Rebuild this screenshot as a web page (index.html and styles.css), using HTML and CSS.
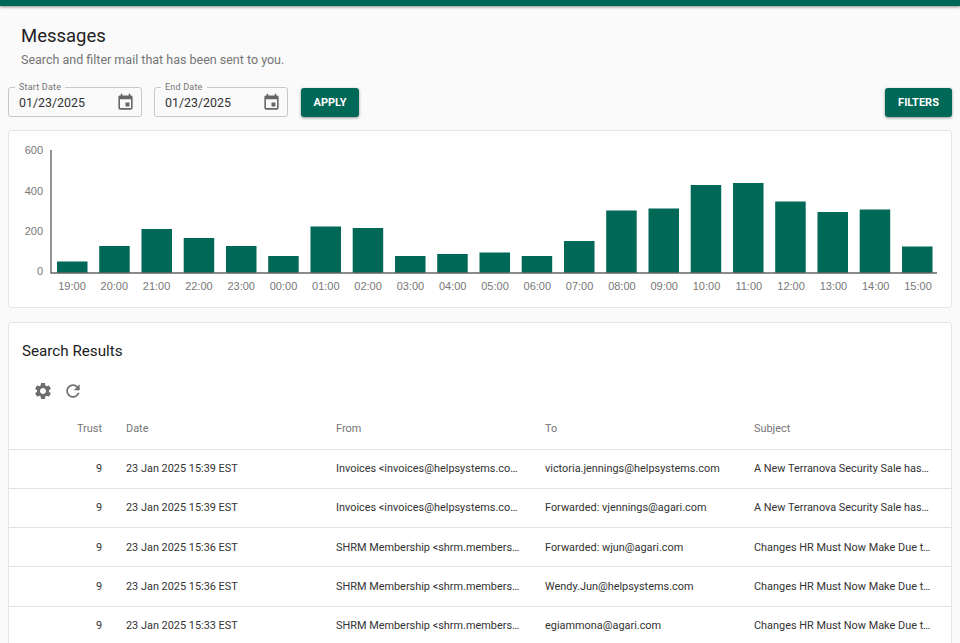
FILE: index.html
```html
<!DOCTYPE html>
<html lang="en">
<head>
<meta charset="utf-8">
<title>Messages</title>
<link rel="stylesheet" href="styles.css">
</head>
<body>
<div class="topbar"></div>
<main class="page">
  <header class="heading">
    <h1>Messages</h1>
    <p>Search and filter mail that has been sent to you.</p>
  </header>
  <div class="toolbar">
    <div class="field">
      <span class="field-label">Start Date</span>
      <span class="field-value">01/23/2025</span>
      <svg class="cal" viewBox="0 0 24 24"><path d="M19 3h-1V1h-2v2H8V1H6v2H5c-1.11 0-2 .9-2 2v14c0 1.1.89 2 2 2h14c1.1 0 2-.9 2-2V5c0-1.1-.9-2-2-2zm0 16H5V8h14v11zM17 12h-5v5h5v-5z"/></svg>
    </div>
    <div class="field">
      <span class="field-label">End Date</span>
      <span class="field-value">01/23/2025</span>
      <svg class="cal" viewBox="0 0 24 24"><path d="M19 3h-1V1h-2v2H8V1H6v2H5c-1.11 0-2 .9-2 2v14c0 1.1.89 2 2 2h14c1.1 0 2-.9 2-2V5c0-1.1-.9-2-2-2zm0 16H5V8h14v11zM17 12h-5v5h5v-5z"/></svg>
    </div>
    <button class="btn apply">APPLY</button>
    <button class="btn filters">FILTERS</button>
  </div>
  <section class="card chart-card">
    <svg class="chart" viewBox="0 0 944 177" width="944" height="177">
      <g class="bars" transform="translate(-8 -130)">
        <rect x="57" y="261.500" width="30.500" height="11.500"/>
        <rect x="99.200" y="246" width="30.500" height="27"/>
        <rect x="141.500" y="229" width="30.500" height="44"/>
        <rect x="183.700" y="238" width="30.500" height="35"/>
        <rect x="226" y="246" width="30.500" height="27"/>
        <rect x="268.200" y="256" width="30.500" height="17"/>
        <rect x="310.500" y="226.500" width="30.500" height="46.500"/>
        <rect x="352.700" y="228" width="30.500" height="45"/>
        <rect x="395" y="256" width="30.500" height="17"/>
        <rect x="437.200" y="254" width="30.500" height="19"/>
        <rect x="479.500" y="252.500" width="30.500" height="20.500"/>
        <rect x="521.700" y="256" width="30.500" height="17"/>
        <rect x="564" y="241" width="30.500" height="32"/>
        <rect x="606.200" y="210.500" width="30.500" height="62.500"/>
        <rect x="648.500" y="208.500" width="30.500" height="64.500"/>
        <rect x="690.700" y="185" width="30.500" height="88"/>
        <rect x="733" y="183" width="30.500" height="90"/>
        <rect x="775.200" y="201.500" width="30.500" height="71.500"/>
        <rect x="817.500" y="212" width="30.500" height="61"/>
        <rect x="859.700" y="209.500" width="30.500" height="63.500"/>
        <rect x="902" y="246.500" width="30.500" height="26.500"/>
      </g>
      <g class="axis" transform="translate(-8 -130)">
        <path d="M51 150V273H937"/>
      </g>
      <g class="ylabels" transform="translate(-8 -130)">
        <text x="43" y="154">600</text>
        <text x="43" y="195">400</text>
        <text x="43" y="235">200</text>
        <text x="43" y="275">0</text>
      </g>
      <g class="xlabels" transform="translate(-8 -130)">
        <text x="72" y="290">19:00</text>
        <text x="114.300" y="290">20:00</text>
        <text x="156.600" y="290">21:00</text>
        <text x="198.900" y="290">22:00</text>
        <text x="241.200" y="290">23:00</text>
        <text x="283.500" y="290">00:00</text>
        <text x="325.800" y="290">01:00</text>
        <text x="368.100" y="290">02:00</text>
        <text x="410.400" y="290">03:00</text>
        <text x="452.700" y="290">04:00</text>
        <text x="495" y="290">05:00</text>
        <text x="537.300" y="290">06:00</text>
        <text x="579.600" y="290">07:00</text>
        <text x="621.900" y="290">08:00</text>
        <text x="664.200" y="290">09:00</text>
        <text x="706.500" y="290">10:00</text>
        <text x="748.800" y="290">11:00</text>
        <text x="791.100" y="290">12:00</text>
        <text x="833.400" y="290">13:00</text>
        <text x="875.700" y="290">14:00</text>
        <text x="918" y="290">15:00</text>
      </g>
    </svg>
  </section>
  <section class="card results">
    <h2>Search Results</h2>
    <div class="icons">
      <svg class="ico" viewBox="0 0 24 24"><path d="M19.14 12.94c.04-.3.06-.61.06-.94 0-.32-.02-.64-.07-.94l2.03-1.58c.18-.14.23-.41.12-.61l-1.92-3.32c-.12-.22-.37-.29-.59-.22l-2.39.96c-.5-.38-1.03-.7-1.62-.94l-.36-2.54c-.04-.24-.24-.41-.48-.41h-3.84c-.24 0-.43.17-.47.41l-.36 2.54c-.59.24-1.13.57-1.62.94l-2.39-.96c-.22-.08-.47 0-.59.22L2.74 8.87c-.12.21-.08.47.12.61l2.03 1.58c-.05.3-.09.63-.09.94s.02.64.07.94l-2.03 1.58c-.18.14-.23.41-.12.61l1.92 3.32c.12.22.37.29.59.22l2.39-.96c.5.38 1.03.7 1.62.94l.36 2.54c.05.24.24.41.48.41h3.84c.24 0 .44-.17.47-.41l.36-2.54c.59-.24 1.13-.56 1.62-.94l2.39.96c.22.08.47 0 .59-.22l1.92-3.32c.12-.22.07-.47-.12-.61l-2.01-1.58zM12 15.6c-1.98 0-3.6-1.62-3.6-3.6s1.62-3.6 3.6-3.6 3.6 1.62 3.6 3.6-1.62 3.6-3.6 3.6z"/></svg>
      <svg class="ico" viewBox="0 0 24 24"><path d="M17.65 6.35C16.2 4.9 14.21 4 12 4c-4.42 0-7.99 3.58-7.99 8s3.57 8 7.99 8c3.73 0 6.84-2.55 7.73-6h-2.08c-.82 2.33-3.04 4-5.65 4-3.31 0-6-2.69-6-6s2.69-6 6-6c1.66 0 3.14.69 4.22 1.78L13 11h7V4l-2.35 2.35z"/></svg>
    </div>
    <table>
      <thead>
        <tr><th class="trust">Trust</th><th class="date">Date</th><th class="from">From</th><th class="to">To</th><th class="subject">Subject</th></tr>
      </thead>
      <tbody>
        <tr><td class="trust">9</td><td>23 Jan 2025 15:39 EST</td><td><span class="clip">Invoices &lt;invoices@helpsystems.com&gt;</span></td><td>victoria.jennings@helpsystems.com</td><td><span class="clip sale">A New Terranova Security Sale has been made</span></td></tr>
        <tr><td class="trust">9</td><td>23 Jan 2025 15:39 EST</td><td><span class="clip">Invoices &lt;invoices@helpsystems.com&gt;</span></td><td>Forwarded: vjennings@agari.com</td><td><span class="clip sale">A New Terranova Security Sale has been made</span></td></tr>
        <tr><td class="trust">9</td><td>23 Jan 2025 15:36 EST</td><td><span class="clip">SHRM Membership &lt;shrm.membership@shrm.org&gt;</span></td><td>Forwarded: wjun@agari.com</td><td><span class="clip subj">Changes HR Must Now Make Due to New Rules</span></td></tr>
        <tr><td class="trust">9</td><td>23 Jan 2025 15:36 EST</td><td><span class="clip">SHRM Membership &lt;shrm.membership@shrm.org&gt;</span></td><td>Wendy.Jun@helpsystems.com</td><td><span class="clip subj">Changes HR Must Now Make Due to New Rules</span></td></tr>
        <tr><td class="trust">9</td><td>23 Jan 2025 15:33 EST</td><td><span class="clip">SHRM Membership &lt;shrm.membership@shrm.org&gt;</span></td><td>egiammona@agari.com</td><td><span class="clip subj">Changes HR Must Now Make Due to New Rules</span></td></tr>
      </tbody>
    </table>
  </section>
</main>
</body>
</html>
```
FILE: styles.css
```css
* { box-sizing: border-box; }
html, body { margin: 0; height: 100%; overflow: hidden; }
body {
  background: #fafafa;
  font-family: Roboto, "Liberation Sans", sans-serif;
  color: #212121;
}
.topbar {
  height: 6px;
  background: #006856;
  box-shadow: 0 1px 3px rgba(0, 0, 0, .45);
}
.page { padding: 0 8px; }
.heading { padding: 19px 0 0 13px; height: 73px; }
.heading h1 {
  margin: 0;
  font-size: 18.5px;
  font-weight: 400;
  line-height: 23px;
  color: #212121;
}
.heading p {
  margin: 3px 0 0;
  font-size: 12.5px;
  line-height: 18px;
  color: #757575;
}
.toolbar {
  display: flex;
  align-items: flex-start;
  height: 43px;
  margin-top: 8px;
}
.field {
  position: relative;
  display: flex;
  align-items: center;
  justify-content: space-between;
  width: 134px;
  height: 30px;
  margin-right: 12px;
  padding: 0 6px 0 10px;
  border: 1px solid #c8c8c8;
  border-radius: 3px;
}
.field-label {
  position: absolute;
  top: -6px;
  left: 6px;
  padding: 0 4px;
  background: #fafafa;
  font-size: 9px;
  line-height: 11px;
  letter-spacing: .2px;
  color: #757575;
}
.field-value { font-size: 12.4px; color: #333; }
.cal { width: 19px; height: 19px; fill: #666; }
.btn {
  height: 29px;
  margin-top: 1px;
  padding: 0 0 1px;
  border: 0;
  border-radius: 3px;
  background: #006856;
  color: #fff;
  font-family: inherit;
  font-size: 11px;
  font-weight: 700;
  box-shadow: 0 1px 3px rgba(0, 0, 0, .4);
}
.apply { width: 58px; margin-left: 1px; }
.filters { width: 67px; margin-left: auto; }
.card {
  background: #fff;
  border: 1px solid #e6e6e6;
  border-radius: 3px;
}
.chart-card { height: 178px; overflow: hidden; }
.chart { display: block; margin: -1px 0 0 -1px; }
.bars rect { fill: #006856; }
.axis path { fill: none; stroke: #666; stroke-width: 1.4; }
.ylabels text, .xlabels text {
  font-family: "Liberation Sans", sans-serif;
  font-size: 11px;
  fill: #777;
}
.ylabels text { text-anchor: end; }
.xlabels text { text-anchor: middle; }
.results { margin-top: 14px; height: 340px; overflow: hidden; }
.results h2 {
  margin: 0;
  padding: 18px 0 0 13px;
  font-size: 15.2px;
  font-weight: 400;
  line-height: 20px;
  color: #212121;
}
.icons {
  display: flex;
  gap: 10px;
  margin-top: 20px;
  padding-left: 24px;
  height: 20px;
}
.ico { width: 20px; height: 20px; fill: #6e6e6e; }
table {
  width: 100%;
  margin-top: 9px;
  border-collapse: collapse;
  table-layout: fixed;
  font-size: 10.9px;
}
th {
  height: 39px;
  padding: 0 0 2px;
  text-align: left;
  font-weight: 400;
  color: #757575;
  border-bottom: 1px solid #e2e2e2;
}
td {
  height: 39.3px;
  padding: 0;
  color: #333;
  border-bottom: 1px solid #e2e2e2;
  white-space: nowrap;
}
th.trust, td.trust { width: 93px; text-align: right; }
th.date { width: 234px; padding-left: 24px; }
th.from { width: 209px; }
th.to { width: 209px; }
td:nth-child(2) { padding-left: 24px; }
.clip {
  display: block;
  width: 185px;
  overflow: hidden;
  text-overflow: ellipsis;
  white-space: nowrap;
}
.clip.subj { width: 179px; }
.clip.sale { width: 177px; }
```
